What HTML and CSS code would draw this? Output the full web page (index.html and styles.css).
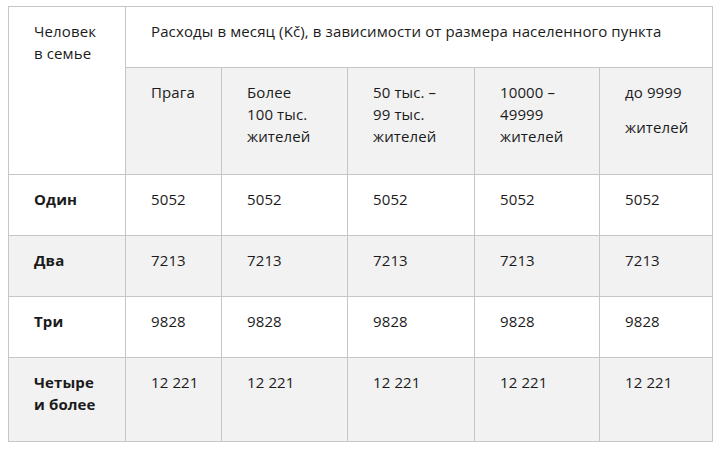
FILE: index.html
```
<!DOCTYPE html>
<html lang="ru">
<head>
<meta charset="utf-8">
<link rel="stylesheet" href="styles.css">
</head>
<body>
<table class="costs">
  <colgroup>
    <col class="c-label">
    <col class="c-praha">
    <col class="c-100">
    <col class="c-50">
    <col class="c-10">
    <col class="c-9">
  </colgroup>
  <tr class="r-head">
    <td rowspan="2">Человек<br>в семье</td>
    <td colspan="5">Расходы в месяц (Kč), в зависимости от размера населенного пункта</td>
  </tr>
  <tr class="r-sub shaded">
    <td>Прага</td>
    <td>Более<br>100 тыс.<br>жителей</td>
    <td>50 тыс. –<br>99 тыс.<br>жителей</td>
    <td>10000 –<br>49999<br>жителей</td>
    <td><p class="para">до 9999</p><p class="para">жителей</p></td>
  </tr>
  <tr class="r-data">
    <th>Один</th><td>5052</td><td>5052</td><td>5052</td><td>5052</td><td>5052</td>
  </tr>
  <tr class="r-data shaded">
    <th>Два</th><td>7213</td><td>7213</td><td>7213</td><td>7213</td><td>7213</td>
  </tr>
  <tr class="r-data">
    <th>Три</th><td>9828</td><td>9828</td><td>9828</td><td>9828</td><td>9828</td>
  </tr>
  <tr class="r-last shaded">
    <th>Четыре<br>и более</th><td>12 221</td><td>12 221</td><td>12 221</td><td>12 221</td><td>12 221</td>
  </tr>
</table>
</body>
</html>
```
FILE: styles.css
```
html, body {
  background: #ffffff;
}
body {
  margin: 6px 8px;
  font-family: "Open Sans", "Noto Sans", sans-serif;
  font-size: 15px;
  letter-spacing: 0.12px;
  color: #1b1b1b;
}
.costs {
  border-collapse: collapse;
  table-layout: fixed;
  width: 704px;
}
.c-label { width: 117px; }
.c-praha { width: 96px; }
.c-100 { width: 126px; }
.c-50 { width: 127px; }
.c-10 { width: 125px; }
.c-9 { width: 113px; }
.costs td, .costs th {
  border: 1px solid #c6c6c6;
  vertical-align: top;
  text-align: left;
  padding: 13px 6px 0 25px;
  line-height: 22px;
  font-weight: normal;
}
.costs th {
  font-weight: bold;
}
.shaded td, .shaded th {
  background: #f2f2f2;
}
.r-head td { background: #ffffff; }
.r-head { height: 61px; }
.r-sub { height: 107px; }
.r-data { height: 61px; }
.r-data:first-of-type { height: 62px; }
.r-last { height: 84px; }
.para {
  margin: 0 0 13px 0;
}
```
